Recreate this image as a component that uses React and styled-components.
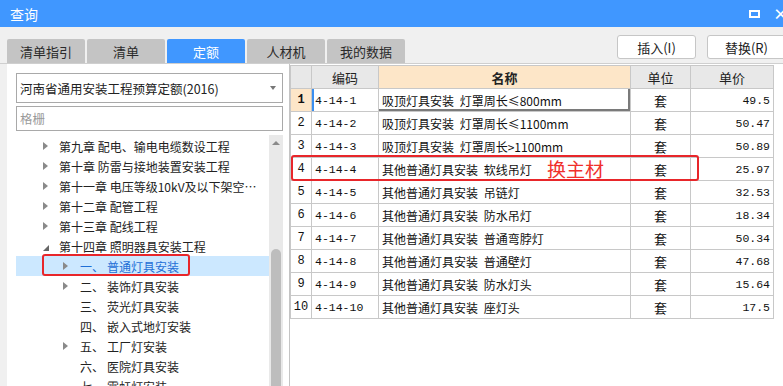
import styled, { createGlobalStyle } from 'styled-components';

const GlobalStyle = createGlobalStyle`
  html, body {
    margin: 0;
    padding: 0;
    overflow: hidden;
    background: #f0f0f0;
  }
  * { box-sizing: border-box; }
`;

const Window = styled.div`
  width: 783px;
  height: 386px;
  display: flex;
  flex-direction: column;
  overflow: hidden;
  font-family: "Noto Sans CJK SC", "Noto Sans", sans-serif;
  background: #f0f0f0;
`;

const TitleBar = styled.div`
  height: 27px;
  flex: none;
  display: flex;
  align-items: center;
  justify-content: space-between;
  background: #4097ff;
  color: #fff;
  padding-left: 10px;
  font-size: 14px;
`;

const TitleIcons = styled.div`
  display: flex;
  align-items: center;
  gap: 13px;
  margin-right: -5px;
`;

const MaxIcon = styled.span`
  width: 11px;
  height: 8px;
  border: 2px solid #fff;
`;

const CloseIcon = styled.span`
  font-size: 15px;
  font-weight: bold;
  line-height: 1;
`;

const Toolbar = styled.div`
  height: 37px;
  flex: none;
  display: flex;
  justify-content: space-between;
  padding-left: 7px;
  margin-right: -3px;
  border-bottom: 1px solid #cfcfcf;
`;

const Tabs = styled.div`
  display: flex;
  gap: 2px;
  align-self: flex-end;
`;

const Tab = styled.div`
  width: 78px;
  height: 24px;
  display: flex;
  align-items: center;
  justify-content: center;
  font-size: 13px;
  border-radius: 2px 2px 0 0;
  background: ${(p) => (p.$active ? '#4097ff' : '#c4c4c4')};
  color: ${(p) => (p.$active ? '#fff' : '#2a2a2a')};
`;

const Buttons = styled.div`
  display: flex;
  gap: 11px;
  padding-top: 8px;
`;

const Button = styled.button`
  width: 79px;
  height: 24px;
  background: #fff;
  border: 1px solid #c6c6c6;
  border-radius: 3px;
  font-family: "Noto Sans CJK SC", "Noto Sans", sans-serif;
  font-size: 13px;
  color: #222;
  padding: 0;
`;

const Main = styled.div`
  flex: 1;
  display: flex;
  min-height: 0;
  padding-left: 7px;
`;

const LeftPanel = styled.div`
  width: 283px;
  flex: none;
  background: #fff;
  border-right: 1px solid #c4c4c4;
  padding: 9px 6px 0 9px;
  display: flex;
  flex-direction: column;
  gap: 3px;
`;

const Select = styled.div`
  height: 30px;
  border: 1px solid #a9a9a9;
  display: flex;
  align-items: center;
  justify-content: space-between;
  padding: 0 6px 0 3px;
  font-size: 12.5px;
  color: #222;
`;

const Caret = styled.span`
  border-left: 3px solid transparent;
  border-right: 3px solid transparent;
  border-top: 4px solid #777;
`;

const Search = styled.div`
  height: 25px;
  border: 1px solid #a9a9a9;
  display: flex;
  align-items: center;
  padding-left: 3px;
  font-size: 12.5px;
  color: #9a9a9a;
`;

const TreeArea = styled.div`
  flex: 1;
  display: flex;
  min-height: 0;
  margin-top: 1px;
`;

const TreeList = styled.div`
  flex: 1;
  overflow: hidden;
  padding-top: 1px;
`;

const TreeRow = styled.div`
  position: relative;
  height: 20px;
  display: flex;
  align-items: center;
  padding-left: ${(p) => (p.$level === 2 ? 47 : 27)}px;
  font-size: 12px;
  white-space: nowrap;
  background: ${(p) => (p.$selected ? '#cce8ff' : 'transparent')};
  color: ${(p) => (p.$selected ? '#1f6fd6' : '#222')};
`;

const ArrowBox = styled.span`
  width: ${(p) => (p.$level === 2 ? 17 : 16)}px;
  flex: none;
  display: flex;
  align-items: center;
`;

const RightArrow = styled.span`
  border-top: 4px solid transparent;
  border-bottom: 4px solid transparent;
  border-left: 5px solid #8a8a8a;
`;

const OpenArrow = styled.span`
  width: 0;
  height: 0;
  border-left: 6px solid transparent;
  border-bottom: 6px solid #666;
  margin-top: 3px;
`;

const ItemNo = styled.span`
  width: 27px;
  flex: none;
`;

const ItemText = styled.span`
  overflow: hidden;
  text-overflow: ellipsis;
  padding-right: 3px;
`;

const RedBox = styled.div`
  position: absolute;
  border: 2px solid #e8262a;
  border-radius: 3px;
  pointer-events: none;
`;

const Scrollbar = styled.div`
  width: 14px;
  flex: none;
  background: #e9e9e9;
  display: flex;
  flex-direction: column;
  align-items: center;
`;

const ScrollUp = styled.span`
  margin-top: 6px;
  border-left: 4px solid transparent;
  border-right: 4px solid transparent;
  border-bottom: 4px solid #8a8a8a;
`;

const Thumb = styled.div`
  width: 10px;
  flex: 1;
  margin-top: 104px;
  background: #bdbdbd;
  border-radius: 5px 5px 0 0;
`;

const RightPanel = styled.div`
  flex: 1;
  background: #fff;
  padding-top: 1px;
`;

const TableWrap = styled.div`
  position: relative;
  width: 483px;
`;

const Table = styled.table`
  border-collapse: collapse;
  table-layout: fixed;
  width: 483px;
  font-family: "Liberation Mono", "Noto Sans CJK SC", monospace;
  font-size: 11.5px;
  color: #111;
`;

const Th = styled.th`
  height: 23px;
  border: 1px solid #c8c8c8;
  background: ${(p) => (p.$accent ? '#fde6c8' : '#e8e8e8')};
  font-family: "Noto Sans CJK SC", sans-serif;
  font-size: 13px;
  font-weight: ${(p) => (p.$accent ? 'bold' : 'normal')};
  color: #222;
  padding: 0;
`;

const Td = styled.td`
  height: 23px;
  border: 1px solid #c8c8c8;
  padding: 0 3px;
  white-space: nowrap;
  overflow: hidden;
  text-align: ${(p) => p.$align || 'left'};
`;

const NumCell = styled(Td)`
  padding: 0;
  text-align: center;
  font-size: 12px;
  background: ${(p) => (p.$current ? '#fde6c8' : '#fff')};
  font-weight: ${(p) => (p.$current ? 'bold' : 'normal')};
`;

const CodeCell = styled(Td)`
  box-shadow: ${(p) => (p.$current ? 'inset 2px 0 0 #3b8ff0' : 'none')};
`;

const NameCell = styled(Td)`
  font-family: "Noto Sans CJK SC", sans-serif;
  font-size: 12px;
  word-spacing: 3px;
  box-shadow: ${(p) => (p.$current ? 'inset -2px -2px 0 #7a7a7a' : 'none')};
`;

const UnitCell = styled(Td)`
  font-family: "Noto Sans CJK SC", sans-serif;
  font-size: 13px;
  text-align: center;
`;

const Note = styled.span`
  position: absolute;
  left: 257px;
  top: 90px;
  font-size: 19px;
  color: #f0302c;
  font-family: "Noto Sans CJK SC", sans-serif;
  pointer-events: none;
`;

const tree = [
  { level: 1, text: '第九章 配电、输电电缆数设工程', arrow: 'right' },
  { level: 1, text: '第十章 防雷与接地装置安装工程', arrow: 'right' },
  { level: 1, text: '第十一章 电压等级10kV及以下架空线路输电工程', arrow: 'right' },
  { level: 1, text: '第十二章 配管工程', arrow: 'right' },
  { level: 1, text: '第十三章 配线工程', arrow: 'right' },
  { level: 1, text: '第十四章 照明器具安装工程', arrow: 'open' },
  { level: 2, no: '一、', text: '普通灯具安装', arrow: 'right', selected: true },
  { level: 2, no: '二、', text: '装饰灯具安装', arrow: 'right' },
  { level: 2, no: '三、', text: '荧光灯具安装' },
  { level: 2, no: '四、', text: '嵌入式地灯安装' },
  { level: 2, no: '五、', text: '工厂灯安装', arrow: 'right' },
  { level: 2, no: '六、', text: '医院灯具安装' },
  { level: 2, no: '七、', text: '霓虹灯安装' },
];

const rows = [
  ['4-14-1', '吸顶灯具安装 灯罩周长≤800mm', '49.5'],
  ['4-14-2', '吸顶灯具安装 灯罩周长≤1100mm', '50.47'],
  ['4-14-3', '吸顶灯具安装 灯罩周长>1100mm', '50.89'],
  ['4-14-4', '其他普通灯具安装 软线吊灯', '25.97'],
  ['4-14-5', '其他普通灯具安装 吊链灯', '32.53'],
  ['4-14-6', '其他普通灯具安装 防水吊灯', '18.34'],
  ['4-14-7', '其他普通灯具安装 普通弯脖灯', '50.34'],
  ['4-14-8', '其他普通灯具安装 普通壁灯', '47.68'],
  ['4-14-9', '其他普通灯具安装 防水灯头', '15.64'],
  ['4-14-10', '其他普通灯具安装 座灯头', '17.5'],
];

const tabs = ['清单指引', '清单', '定额', '人材机', '我的数据'];

export default function App() {
  return (
    <Window>
      <GlobalStyle />
      <TitleBar>
        <span>查询</span>
        <TitleIcons>
          <MaxIcon />
          <CloseIcon>×</CloseIcon>
        </TitleIcons>
      </TitleBar>

      <Toolbar>
        <Tabs>
          {tabs.map((t) => (
            <Tab key={t} $active={t === '定额'}>{t}</Tab>
          ))}
        </Tabs>
        <Buttons>
          <Button>插入(I)</Button>
          <Button>替换(R)</Button>
        </Buttons>
      </Toolbar>

      <Main>
        <LeftPanel>
          <Select>
            <span>河南省通用安装工程预算定额(2016)</span>
            <Caret />
          </Select>
          <Search>格栅</Search>
          <TreeArea>
            <TreeList>
              {tree.map((n) => (
                <TreeRow key={n.text} $level={n.level} $selected={n.selected}>
                  <ArrowBox $level={n.level}>
                    {n.arrow === 'right' && <RightArrow />}
                    {n.arrow === 'open' && <OpenArrow />}
                  </ArrowBox>
                  {n.no && <ItemNo>{n.no}</ItemNo>}
                  <ItemText>{n.text}</ItemText>
                  {n.selected && (
                    <RedBox style={{ left: 26, top: -2, width: 148, height: 22 }} />
                  )}
                </TreeRow>
              ))}
            </TreeList>
            <Scrollbar>
              <ScrollUp />
              <Thumb />
            </Scrollbar>
          </TreeArea>
        </LeftPanel>

        <RightPanel>
          <TableWrap>
            <Table>
              <colgroup>
                <col style={{ width: 21 }} />
                <col style={{ width: 67 }} />
                <col style={{ width: 252 }} />
                <col style={{ width: 60 }} />
                <col style={{ width: 83 }} />
              </colgroup>
              <thead>
                <tr>
                  <Th />
                  <Th>编码</Th>
                  <Th $accent>名称</Th>
                  <Th>单位</Th>
                  <Th>单价</Th>
                </tr>
              </thead>
              <tbody>
                {rows.map(([code, name, price], i) => (
                  <tr key={code}>
                    <NumCell $current={i === 0}>{i + 1}</NumCell>
                    <CodeCell $current={i === 0}>{code}</CodeCell>
                    <NameCell $current={i === 0}>{name}</NameCell>
                    <UnitCell>套</UnitCell>
                    <Td $align="right">{price}</Td>
                  </tr>
                ))}
              </tbody>
            </Table>
            <RedBox style={{ left: 1, top: 90, width: 408, height: 26 }} />
            <Note>换主材</Note>
          </TableWrap>
        </RightPanel>
      </Main>
    </Window>
  );
}
